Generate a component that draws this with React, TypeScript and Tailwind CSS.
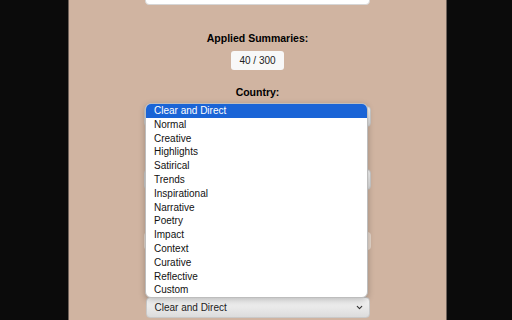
import { ChevronDown } from 'lucide-react';

const styles = [
  'Clear and Direct',
  'Normal',
  'Creative',
  'Highlights',
  'Satirical',
  'Trends',
  'Inspirational',
  'Narrative',
  'Poetry',
  'Impact',
  'Context',
  'Curative',
  'Reflective',
  'Custom',
];

function FakeSelect({ label, wide }: { label?: string; wide?: boolean }) {
  return (
    <div
      className={`flex h-[21px] items-center justify-between rounded-[4px] border border-[#c9c9c9] bg-gradient-to-b from-[#f7f7f7] to-[#dcdcdc] pl-[8px] pr-[5px] text-[10px] text-[#222] ${
        wide ? 'w-[227px]' : 'w-[224px]'
      }`}
    >
      <span>{label}</span>
      <ChevronDown size={9} strokeWidth={3} className="text-[#333]" />
    </div>
  );
}

export default function App() {
  return (
    <div
      className="flex h-[320px] w-[512px] overflow-hidden bg-[#0b0b0b] pl-[68px] pr-[65px]"
      style={{ fontFamily: '"Liberation Sans", Arial, sans-serif' }}
    >
      <div className="relative flex flex-1 flex-col items-center border-x border-[#6f625a] bg-[#d0b4a1]">
        <div className="-mt-[25px] h-[30px] w-[225px] rounded-[4px] border border-[#d6d6d6] bg-white" />

        <div className="mt-[25px] text-[10.5px] font-bold leading-[16px] text-black">Applied Summaries:</div>
        <div className="mt-[5px] flex h-[19px] w-[53px] items-center justify-center rounded-[3px] bg-[#f8f8f8] text-[10px] text-[#222]">
          40 / 300
        </div>

        <div className="mt-[14px] text-[10.5px] font-bold leading-[16px] text-black">Country:</div>
        {/* controls hidden behind the open dropdown */}
        <div className="mt-[6px]">
          <FakeSelect wide />
        </div>
        <div className="mt-[42px]">
          <FakeSelect wide />
        </div>
        <div className="mt-[42px] h-[18px] w-[227px] rounded-[4px] bg-[#e4d6cb]" />

        <div className="mt-[47px]">
          <FakeSelect label="Clear and Direct" />
        </div>

        <ul className="absolute left-[76px] top-[103px] w-[223px] overflow-hidden rounded-[6px] border border-[#bdbdbd] bg-white text-[10px] shadow-[0_2px_6px_rgba(0,0,0,0.25)]">
          {styles.map((s, i) => (
            <li
              key={s}
              className={`h-[13.8px] pl-[8px] leading-[13.8px] ${
                i === 0 ? 'bg-[#1a64d6] text-white' : 'text-[#111]'
              }`}
            >
              {s}
            </li>
          ))}
        </ul>
      </div>
    </div>
  );
}
